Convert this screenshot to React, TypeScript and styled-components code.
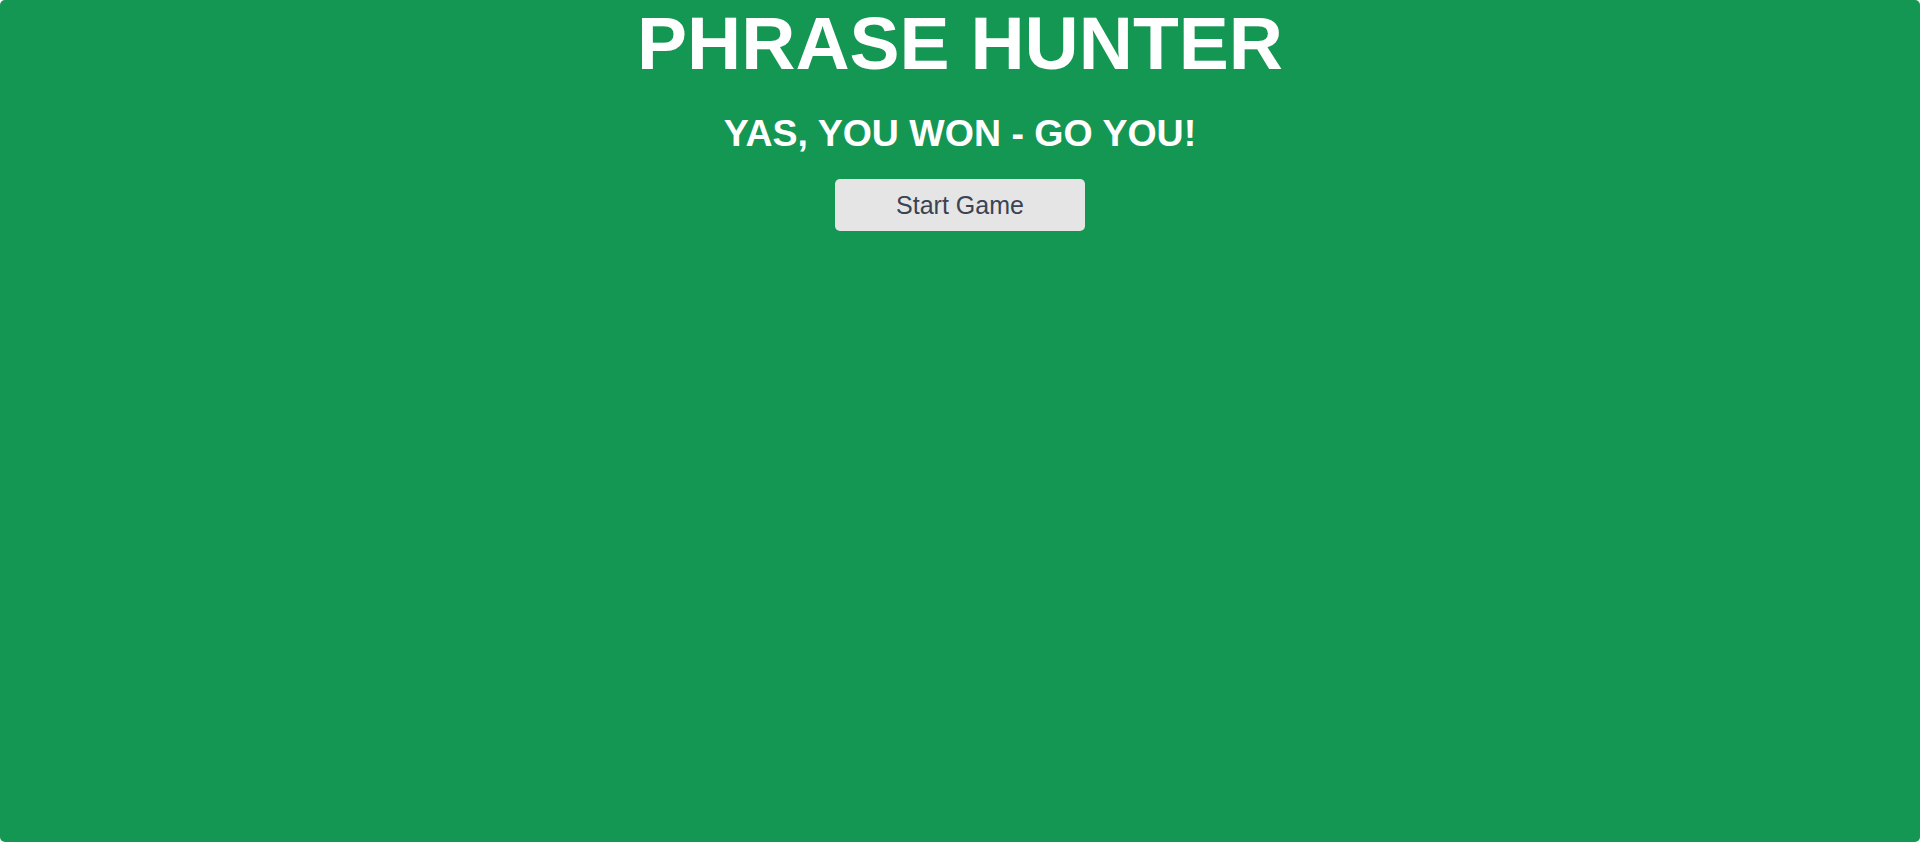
import React from "react";
import styled, { createGlobalStyle } from "styled-components";

const Global = createGlobalStyle`
  html, body { margin: 0; padding: 0; background: #ffffff; }
  body { font-family: "Liberation Sans", Arial, sans-serif; }
  * { box-sizing: border-box; }
`;

const Overlay = styled.div`
  height: 100vh;
  width: 100%;
  background: #149752;
  border-radius: 5px;
  display: flex;
  flex-direction: column;
  align-items: center;
`;

const Title = styled.h1`
  margin: 0;
  font-family: "Liberation Sans", Arial, sans-serif;
  font-size: 75px;
  font-weight: 700;
  color: #ffffff;
  line-height: 87px;
`;

const Message = styled.h2`
  margin: 25px 0 0;
  font-family: "Liberation Sans", Arial, sans-serif;
  font-size: 37.5px;
  font-weight: 700;
  color: #ffffff;
  line-height: 42px;
`;

const StartButton = styled.button`
  margin-top: 25px;
  width: 250px;
  height: 52px;
  border: none;
  border-radius: 5px;
  background: #e5e5e5;
  color: #3a4353;
  font-family: "Liberation Sans", Arial, sans-serif;
  font-size: 25px;
  cursor: pointer;
`;

export default function App() {
  return (
    <>
      <Global />
      <Overlay>
        <Title>PHRASE HUNTER</Title>
        <Message>YAS, YOU WON - GO YOU!</Message>
        <StartButton>Start Game</StartButton>
      </Overlay>
    </>
  );
}
